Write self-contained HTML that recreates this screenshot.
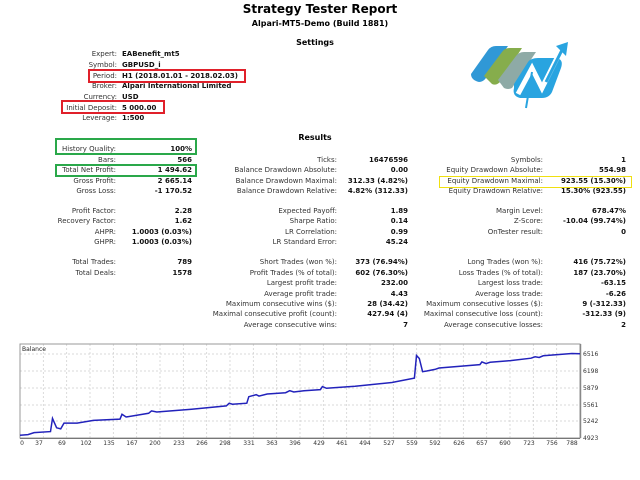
<!DOCTYPE html>
<html><head><meta charset="utf-8"><style>
body{margin:0;width:640px;height:480px;background:#fff;position:relative;overflow:hidden;font-family:"DejaVu Sans","Liberation Sans",sans-serif;color:#000}
.t{position:absolute;font-size:7px;line-height:10px;white-space:nowrap}
.l{text-align:right;color:#333}
.v{font-weight:bold;color:#111}
.r{text-align:right}
.box{position:absolute;border:2px solid;box-sizing:border-box}
</style></head><body>
<div class="t" style="left:0;width:640px;text-align:center;top:2px;font-size:12px;line-height:14px;font-weight:bold">Strategy Tester Report</div>
<div class="t" style="left:0;width:640px;text-align:center;top:19px;font-size:8px;font-weight:bold">Alpari-MT5-Demo (Build 1881)</div>
<div class="t" style="left:0;width:630px;text-align:center;top:38px;font-size:8px;font-weight:bold">Settings</div>

<div class="t l" style="right:523px;top:49px">Expert:</div><div class="t v" style="left:122px;top:49px">EABenefit_mt5</div>
<div class="t l" style="right:523px;top:60px">Symbol:</div><div class="t v" style="left:122px;top:60px">GBPUSD_i</div>
<div class="t l" style="right:523px;top:71px">Period:</div><div class="t v" style="left:122px;top:71px">H1 (2018.01.01 - 2018.02.03)</div>
<div class="t l" style="right:523px;top:81px">Broker:</div><div class="t v" style="left:122px;top:81px">Alpari International Limited</div>
<div class="t l" style="right:523px;top:92px">Currency:</div><div class="t v" style="left:122px;top:92px">USD</div>
<div class="t l" style="right:523px;top:103px">Initial Deposit:</div><div class="t v" style="left:122px;top:103px">5 000.00</div>
<div class="t l" style="right:523px;top:113px">Leverage:</div><div class="t v" style="left:122px;top:113px">1:500</div>
<div class="box" style="border-color:#e0202a;left:88px;top:69px;width:158px;height:14px"></div>
<div class="box" style="border-color:#e0202a;left:61px;top:100px;width:104px;height:14px"></div>

<svg style="position:absolute;left:466px;top:42px" width="104" height="72" viewBox="0 0 104 72">
<path d="M5 32 L22 8 Q25 4 30 4 L42 4 L20 36 Q17 40 13 40 Q5 38 5 32Z" fill="#3098d6"/>
<path d="M18 34 L36 10 Q39 6 44 6 L56 6 L34 40 Q30 44 26 42 Z" fill="#86ad4c"/>
<path d="M32 38 L50 14 Q53 10 58 10 L70 10 L46 46 Q42 48 38 46Z" fill="#8eaaa6"/>
<path d="M48 42 L62 20 Q65 16 72 16 L90 16 Q98 17 95 26 L86 50 Q83 56 76 56 L54 56 Q46 54 48 46Z" fill="#29a4e0"/>
<path d="M52 52 L66 26 L76 46 L92 14" fill="none" stroke="#fff" stroke-width="5"/>
<path d="M66 30 L60 66" stroke="#29a4e0" stroke-width="2"/>
<path d="M80 40 L96 8" stroke="#29a4e0" stroke-width="3"/>
<path d="M90 4 L102 0 L100 14Z" fill="#29a4e0"/>
</svg>

<div class="t" style="left:0;width:630px;text-align:center;top:133px;font-size:8px;font-weight:bold">Results</div>

<div class="t l" style="right:524px;top:144px">History Quality:</div><div class="t v r" style="right:448px;top:144px">100%</div>
<div class="t l" style="right:524px;top:155px">Bars:</div><div class="t v r" style="right:448px;top:155px">566</div>
<div class="t l" style="right:524px;top:165px">Total Net Profit:</div><div class="t v r" style="right:448px;top:165px">1 494.62</div>
<div class="t l" style="right:524px;top:176px">Gross Profit:</div><div class="t v r" style="right:448px;top:176px">2 665.14</div>
<div class="t l" style="right:524px;top:186px">Gross Loss:</div><div class="t v r" style="right:448px;top:186px">-1 170.52</div>
<div class="t l" style="right:524px;top:206px">Profit Factor:</div><div class="t v r" style="right:448px;top:206px">2.28</div>
<div class="t l" style="right:524px;top:216px">Recovery Factor:</div><div class="t v r" style="right:448px;top:216px">1.62</div>
<div class="t l" style="right:524px;top:227px">AHPR:</div><div class="t v r" style="right:448px;top:227px">1.0003 (0.03%)</div>
<div class="t l" style="right:524px;top:237px">GHPR:</div><div class="t v r" style="right:448px;top:237px">1.0003 (0.03%)</div>
<div class="t l" style="right:524px;top:257px">Total Trades:</div><div class="t v r" style="right:448px;top:257px">789</div>
<div class="t l" style="right:524px;top:268px">Total Deals:</div><div class="t v r" style="right:448px;top:268px">1578</div>
<div class="box" style="border-color:#2aa84a;left:55px;top:138px;width:142px;height:17px"></div>
<div class="box" style="border-color:#2aa84a;left:55px;top:164px;width:142px;height:13px"></div>

<div class="t l" style="right:303px;top:155px">Ticks:</div><div class="t v r" style="right:232px;top:155px">16476596</div>
<div class="t l" style="right:303px;top:165px">Balance Drawdown Absolute:</div><div class="t v r" style="right:232px;top:165px">0.00</div>
<div class="t l" style="right:303px;top:176px">Balance Drawdown Maximal:</div><div class="t v r" style="right:232px;top:176px">312.33 (4.82%)</div>
<div class="t l" style="right:303px;top:186px">Balance Drawdown Relative:</div><div class="t v r" style="right:232px;top:186px">4.82% (312.33)</div>
<div class="t l" style="right:303px;top:206px">Expected Payoff:</div><div class="t v r" style="right:232px;top:206px">1.89</div>
<div class="t l" style="right:303px;top:216px">Sharpe Ratio:</div><div class="t v r" style="right:232px;top:216px">0.14</div>
<div class="t l" style="right:303px;top:227px">LR Correlation:</div><div class="t v r" style="right:232px;top:227px">0.99</div>
<div class="t l" style="right:303px;top:237px">LR Standard Error:</div><div class="t v r" style="right:232px;top:237px">45.24</div>
<div class="t l" style="right:303px;top:257px">Short Trades (won %):</div><div class="t v r" style="right:232px;top:257px">373 (76.94%)</div>
<div class="t l" style="right:303px;top:268px">Profit Trades (% of total):</div><div class="t v r" style="right:232px;top:268px">602 (76.30%)</div>
<div class="t l" style="right:303px;top:278px">Largest profit trade:</div><div class="t v r" style="right:232px;top:278px">232.00</div>
<div class="t l" style="right:303px;top:289px">Average profit trade:</div><div class="t v r" style="right:232px;top:289px">4.43</div>
<div class="t l" style="right:303px;top:299px">Maximum consecutive wins ($):</div><div class="t v r" style="right:232px;top:299px">28 (34.42)</div>
<div class="t l" style="right:303px;top:309px">Maximal consecutive profit (count):</div><div class="t v r" style="right:232px;top:309px">427.94 (4)</div>
<div class="t l" style="right:303px;top:320px">Average consecutive wins:</div><div class="t v r" style="right:232px;top:320px">7</div>

<div class="t l" style="right:97px;top:155px">Symbols:</div><div class="t v r" style="right:14px;top:155px">1</div>
<div class="t l" style="right:97px;top:165px">Equity Drawdown Absolute:</div><div class="t v r" style="right:14px;top:165px">554.98</div>
<div class="t l" style="right:97px;top:176px">Equity Drawdown Maximal:</div><div class="t v r" style="right:14px;top:176px">923.55 (15.30%)</div>
<div class="t l" style="right:97px;top:186px">Equity Drawdown Relative:</div><div class="t v r" style="right:14px;top:186px">15.30% (923.55)</div>
<div class="t l" style="right:97px;top:206px">Margin Level:</div><div class="t v r" style="right:14px;top:206px">678.47%</div>
<div class="t l" style="right:97px;top:216px">Z-Score:</div><div class="t v r" style="right:14px;top:216px">-10.04 (99.74%)</div>
<div class="t l" style="right:97px;top:227px">OnTester result:</div><div class="t v r" style="right:14px;top:227px">0</div>
<div class="t l" style="right:97px;top:257px">Long Trades (won %):</div><div class="t v r" style="right:14px;top:257px">416 (75.72%)</div>
<div class="t l" style="right:97px;top:268px">Loss Trades (% of total):</div><div class="t v r" style="right:14px;top:268px">187 (23.70%)</div>
<div class="t l" style="right:97px;top:278px">Largest loss trade:</div><div class="t v r" style="right:14px;top:278px">-63.15</div>
<div class="t l" style="right:97px;top:289px">Average loss trade:</div><div class="t v r" style="right:14px;top:289px">-6.26</div>
<div class="t l" style="right:97px;top:299px">Maximum consecutive losses ($):</div><div class="t v r" style="right:14px;top:299px">9 (-312.33)</div>
<div class="t l" style="right:97px;top:309px">Maximal consecutive loss (count):</div><div class="t v r" style="right:14px;top:309px">-312.33 (9)</div>
<div class="t l" style="right:97px;top:320px">Average consecutive losses:</div><div class="t v r" style="right:14px;top:320px">2</div>
<div class="box" style="border-color:#f0e010;left:439px;top:176px;width:193px;height:12px;border-width:1.5px"></div>

<svg style="position:absolute;left:0;top:0" width="640" height="480" font-family="DejaVu Sans,Liberation Sans,sans-serif" font-size="6">
<g stroke="#ccc" stroke-width="0.7" stroke-dasharray="2,2">
<line x1="20" y1="354" x2="580" y2="354"/><line x1="20" y1="371" x2="580" y2="371"/><line x1="20" y1="388" x2="580" y2="388"/><line x1="20" y1="405" x2="580" y2="405"/><line x1="20" y1="421" x2="580" y2="421"/>
<line x1="43.3" y1="344" x2="43.3" y2="438"/><line x1="66.7" y1="344" x2="66.7" y2="438"/><line x1="90" y1="344" x2="90" y2="438"/><line x1="113.3" y1="344" x2="113.3" y2="438"/><line x1="136.7" y1="344" x2="136.7" y2="438"/><line x1="160" y1="344" x2="160" y2="438"/><line x1="183.3" y1="344" x2="183.3" y2="438"/><line x1="206.7" y1="344" x2="206.7" y2="438"/><line x1="230" y1="344" x2="230" y2="438"/><line x1="253.3" y1="344" x2="253.3" y2="438"/><line x1="276.7" y1="344" x2="276.7" y2="438"/><line x1="300" y1="344" x2="300" y2="438"/><line x1="323.3" y1="344" x2="323.3" y2="438"/><line x1="346.7" y1="344" x2="346.7" y2="438"/><line x1="370" y1="344" x2="370" y2="438"/><line x1="393.3" y1="344" x2="393.3" y2="438"/><line x1="416.7" y1="344" x2="416.7" y2="438"/><line x1="440" y1="344" x2="440" y2="438"/><line x1="463.3" y1="344" x2="463.3" y2="438"/><line x1="486.7" y1="344" x2="486.7" y2="438"/><line x1="510" y1="344" x2="510" y2="438"/><line x1="533.3" y1="344" x2="533.3" y2="438"/><line x1="556.7" y1="344" x2="556.7" y2="438"/>
</g>
<rect x="20" y="344" width="560" height="94" fill="none" stroke="#999" stroke-width="1"/>
<line x1="580.5" y1="344" x2="580.5" y2="438" stroke="#888" stroke-width="1.5"/>
<line x1="20" y1="438.5" x2="580" y2="438.5" stroke="#777" stroke-width="1"/>
<text x="22" y="351" fill="#222">Balance</text>
<polyline fill="none" stroke="#2222bb" stroke-width="1.5" points="20,435.3 28,434.6 34.1,432.6 50.5,431.6 52.5,418.4 56.6,427.8 60.7,428.9 64,423.1 77.1,423.1 93.4,420.4 120,419.1 122,414.3 126.1,417 148.6,413.3 151.5,410.9 156.8,412 191.6,409.3 226.3,405.9 229.2,403.2 232.4,404.2 246.8,403.2 248.8,396.7 256.2,394.7 259,396.1 267.2,394 285.6,392.7 289.7,390.7 293.8,392 304,390.7 320.4,389.6 322.4,386.6 326.5,388.3 355.1,386.3 391.9,382.5 414.4,378.1 416.5,355.5 419.3,358.5 422.6,371.7 426.7,371 434.9,369.4 439,368 479.9,364.6 481.9,361.9 486,363.6 490.1,362.3 510.5,360.6 531,358.2 535.1,356.8 539.2,357.5 543.2,355.8 571.9,353.5 580,353.8"/>
<g fill="#333">
<text x="583" y="356">6516</text><text x="583" y="373">6198</text><text x="583" y="390">5879</text><text x="583" y="407">5561</text><text x="583" y="423">5242</text><text x="583" y="440">4923</text>
</g>
<g fill="#333" text-anchor="middle">
<text x="22" y="445">0</text><text x="39" y="445">37</text><text x="62" y="445">69</text><text x="86" y="445">102</text><text x="109" y="445">135</text><text x="132" y="445">167</text><text x="155" y="445">200</text><text x="179" y="445">233</text><text x="202" y="445">266</text><text x="225" y="445">298</text><text x="249" y="445">331</text><text x="272" y="445">363</text><text x="295" y="445">396</text><text x="319" y="445">429</text><text x="342" y="445">461</text><text x="365" y="445">494</text><text x="389" y="445">527</text><text x="412" y="445">559</text><text x="435" y="445">592</text><text x="459" y="445">626</text><text x="482" y="445">657</text><text x="505" y="445">690</text><text x="529" y="445">723</text><text x="552" y="445">756</text><text x="572" y="445">788</text>
</g>
</svg>
</body></html>
